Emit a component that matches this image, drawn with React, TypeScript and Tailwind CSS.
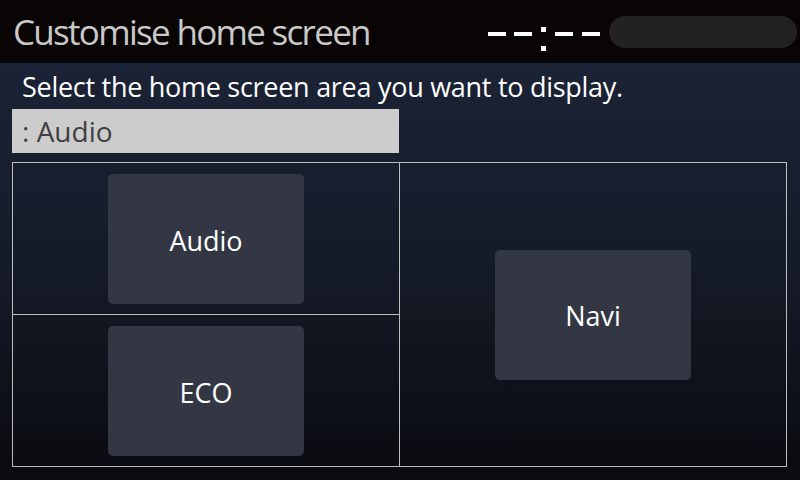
import React from 'react'

const font = { fontFamily: '"Open Sans", "Noto Sans", sans-serif' }

function Tile({ label }: { label: string }) {
    return (
        <div className="flex h-[130px] w-[196px] items-center justify-center rounded-[5px] bg-[#333744] pt-[4px] text-[27px] text-white">
            {label}
        </div>
    )
}

function Clock() {
    // "--:--" drawn as blocks, like the head unit's segment clock
    return (
        <div className="flex h-[24px] items-start">
            <div className="mt-[5px] h-[4px] w-[18px] bg-white" />
            <div className="ml-[8px] mt-[5px] h-[4px] w-[18px] bg-white" />
            <div className="mx-[9px] flex h-[24px] flex-col justify-between">
                <div className="h-[5px] w-[5px] bg-white" />
                <div className="h-[5px] w-[5px] bg-white" />
            </div>
            <div className="mt-[5px] h-[4px] w-[18px] bg-white" />
            <div className="ml-[9px] mt-[5px] h-[4px] w-[18px] bg-white" />
        </div>
    )
}

export default function App() {
    return (
        <div className="flex h-[480px] w-[800px] flex-col overflow-hidden" style={font}>
            {/* Header */}
            <div className="flex h-[63px] shrink-0 items-center bg-[#090505]">
                <h1 className="pl-[13px] text-[35px] leading-none tracking-[-1.7px] text-[#c9c9c9]">Customise home screen</h1>
                <div className="ml-auto flex items-start self-stretch pr-[3px] pt-[16px]">
                    <div className="mt-[11px]">
                        <Clock />
                    </div>
                    <div className="ml-[9px] h-[32px] w-[188px] rounded-full bg-[#222222]" />
                </div>
            </div>

            {/* Body */}
            <div className="flex flex-1 flex-col bg-gradient-to-b from-[#1b2336] via-[#151a27] to-[#0a0b10]">
                <p className="h-[46px] pl-[22px] pt-[1px] text-[27px] leading-[46px] tracking-[-0.28px] text-white">
                    Select the home screen area you want to display.
                </p>
                <div className="ml-[12px] flex h-[44px] w-[387px] items-center bg-[#cccccc] pl-[10px] text-[28px] text-[#404040]">
                    : Audio
                </div>

                <div className="ml-[12px] mt-[9px] grid h-[305px] w-[775px] grid-cols-[387px_1fr] border border-[#bdbdbd]">
                    <div className="grid grid-rows-2 border-r border-[#bdbdbd]">
                        <div className="flex items-center justify-center border-b border-[#bdbdbd] pt-[1px]">
                            <Tile label="Audio" />
                        </div>
                        <div className="flex items-center justify-center pt-[1px]">
                            <Tile label="ECO" />
                        </div>
                    </div>
                    <div className="flex items-center justify-center">
                        <Tile label="Navi" />
                    </div>
                </div>
            </div>
        </div>
    )
}
